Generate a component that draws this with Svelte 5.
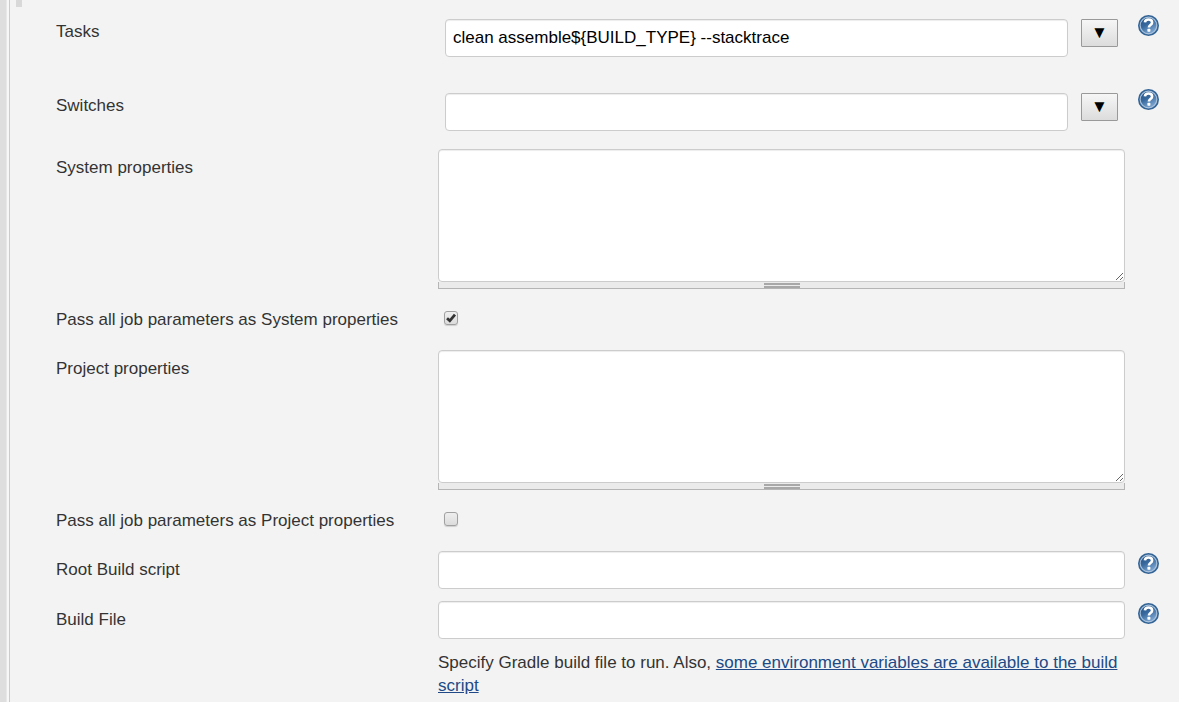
<script>
  let tasks = $state('clean assemble${BUILD_TYPE} --stacktrace');
  let switches = $state('');
  let systemProps = $state('');
  let passSystem = $state(true);
  let projectProps = $state('');
  let passProject = $state(false);
  let rootScript = $state('');
  let buildFile = $state('');
</script>

{#snippet help(topic)}
  <a class="help" href="#help" aria-label={`Help for ${topic}`}>
    <svg width="21" height="21" viewBox="0 0 21 21" aria-hidden="true">
      <defs>
        <linearGradient id="ball" x1="0" y1="0" x2="0.6" y2="1">
          <stop offset="0" stop-color="#235083" />
          <stop offset="0.5" stop-color="#396a9f" />
          <stop offset="1" stop-color="#7ba4cf" />
        </linearGradient>
      </defs>
      <circle cx="10.5" cy="10.5" r="9.7" fill="#abc3dc" stroke="#336496" stroke-width="1.6" />
      <circle cx="10.5" cy="10.5" r="7.8" fill="url(#ball)" />
      <path d="M6.9 7.4C7.1 5.4 8.5 4.5 10.5 4.5c2.2 0 3.6 1.1 3.6 2.9 0 2.6-3.2 2.6-3.2 5" fill="none" stroke="#fff" stroke-width="2.6" />
      <rect x="9.4" y="13.8" width="3" height="2.9" rx="0.6" fill="#fff" />
    </svg>
  </a>
{/snippet}

<div class="page">
  <div class="rail"></div>
  <form class="step">
    <div class="drag"></div>

    <div class="row spaced">
      <label for="tasks">Tasks</label>
      <div class="combo">
        <input id="tasks" type="text" bind:value={tasks} />
        <button type="button" aria-label="Expand tasks">▼</button>
      </div>
      {@render help('tasks')}
    </div>

    <div class="row">
      <label for="switches">Switches</label>
      <div class="combo">
        <input id="switches" type="text" bind:value={switches} />
        <button type="button" aria-label="Expand switches">▼</button>
      </div>
      {@render help('switches')}
    </div>

    <div class="row">
      <label for="system">System properties</label>
      <div class="area">
        <textarea id="system" bind:value={systemProps}></textarea>
        <div class="grip"><span></span></div>
      </div>
    </div>

    <div class="row check">
      <label for="pass-system">Pass all job parameters as System properties</label>
      <input id="pass-system" type="checkbox" bind:checked={passSystem} />
    </div>

    <div class="row">
      <label for="project">Project properties</label>
      <div class="area">
        <textarea id="project" bind:value={projectProps}></textarea>
        <div class="grip"><span></span></div>
      </div>
    </div>

    <div class="row check">
      <label for="pass-project">Pass all job parameters as Project properties</label>
      <input id="pass-project" type="checkbox" bind:checked={passProject} />
    </div>

    <div class="row">
      <label for="root">Root Build script</label>
      <input id="root" type="text" bind:value={rootScript} />
      {@render help('root build script')}
    </div>

    <div class="row">
      <label for="file">Build File</label>
      <input id="file" type="text" bind:value={buildFile} />
      {@render help('build file')}
    </div>

    <div class="row">
      <p>Specify Gradle build file to run. Also, <a href="#variables">some environment variables are available to the build script</a></p>
    </div>
  </form>
</div>

<style>
  :global(body) {
    margin: 0;
    background: #f3f3f3;
  }

  .page {
    display: flex;
    min-height: 100vh;
    font-family: "Liberation Sans", Arial, sans-serif;
    font-size: 17px;
    line-height: 23px;
    color: #333;
  }

  .page * {
    box-sizing: border-box;
  }

  .rail {
    flex: none;
    width: 9px;
    background: linear-gradient(to right, #dedede 6px, #e8e8e8 6px 7px, #f7f7f7 7px);
  }

  .step {
    flex: 1;
    min-width: 0;
    display: flex;
    flex-direction: column;
    gap: 12px;
    padding-left: 6px;
    border-left: 1px solid #ccc;
  }

  .drag {
    width: 6px;
    height: 7px;
    margin-bottom: -6px;
    background: #d8d8d8;
  }

  .row {
    display: grid;
    grid-template-columns: 382px minmax(0, 1fr) 54px;
    align-items: start;
    padding-left: 40px;
  }

  .spaced {
    margin-bottom: 12px;
  }

  .check {
    min-height: 37px;
  }

  label {
    padding-top: 7px;
  }

  input[type='text'] {
    width: 100%;
    min-width: 0;
    height: 38px;
    padding: 0 7px;
    border: 1px solid #ccc;
    border-radius: 4px;
    background: #fff;
    box-shadow: inset 0 1px 1px rgba(0, 0, 0, 0.075);
    font: inherit;
    color: #000;
  }

  .combo {
    display: flex;
    align-items: flex-start;
    gap: 13px;
    padding: 6px 7px;
  }

  button {
    flex: none;
    width: 37px;
    height: 28px;
    padding: 0;
    border: 1px solid #999;
    border-radius: 1px;
    background: linear-gradient(#f6f6f6, #dcdcdc);
    font: 17px/24px "Liberation Sans", "DejaVu Sans", sans-serif;
    color: #000;
  }

  textarea {
    display: block;
    width: 100%;
    height: 133px;
    padding: 6px 7px;
    border: 1px solid #ccc;
    border-radius: 4px;
    background: #fff;
    box-shadow: inset 0 1px 1px rgba(0, 0, 0, 0.075);
    font: inherit;
    resize: vertical;
  }

  .grip {
    display: flex;
    justify-content: center;
    height: 7px;
    padding-top: 1px;
    border: 1px solid #b5b5b5;
    border-top: 0;
    background: #ebebeb;
  }

  .grip span {
    width: 36px;
    height: 5px;
    border: solid #a8a8a8;
    border-width: 2px 0;
  }

  input[type='checkbox'] {
    appearance: none;
    width: 14px;
    height: 14px;
    margin: 10px 6px;
    border: 1px solid #a0a0a0;
    border-radius: 3px;
    background: linear-gradient(#eee, #dcdcdc);
    box-shadow: 0 1px 1px rgba(0, 0, 0, 0.15);
  }

  input[type='checkbox']:checked {
    background: url("data:image/svg+xml,%3Csvg xmlns='http://www.w3.org/2000/svg' viewBox='0 0 13 13'%3E%3Cpath d='M2.2 6.8 5.2 9.5 10.8 2.8' fill='none' stroke='%23333' stroke-width='3'/%3E%3C/svg%3E"), linear-gradient(#eee, #dcdcdc);
  }

  .help {
    justify-self: start;
    margin: 2px 0 0 13px;
  }

  .help svg {
    display: block;
  }

  p {
    grid-column: 2;
    margin: 0;
  }

  p a {
    color: #204a87;
  }
</style>
